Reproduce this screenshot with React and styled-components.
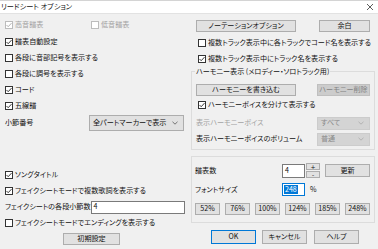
import React from 'react';
import styled, { createGlobalStyle } from 'styled-components';

const Global = createGlobalStyle`
  html, body { margin: 0; padding: 0; background: #f0f0f0; }
  body { font-family: "Noto Sans CJK JP", "Noto Sans", sans-serif; }
`;

const Window = styled.div`
  width: 378px;
  height: 249px;
  overflow: hidden;
  background: #f0f0f0;
  display: flex;
  flex-direction: column;
  font-family: "Noto Sans CJK JP", "Noto Sans", sans-serif;
  font-feature-settings: "palt";
  font-size: 7.1px;
  line-height: 1;
  color: #111;
`;

const TitleBar = styled.div`
  box-sizing: border-box;
  height: 14px;
  background: #fff;
  border-top: 1px solid #d4d4d4;
  border-bottom: 1px solid #e2e2e2;
  display: flex;
  align-items: center;
  justify-content: space-between;
  padding: 0 4px 0 1px;
`;

const Title = styled.span`
  font-size: 7.2px;
  color: #111;
`;

const Body = styled.div`
  display: grid;
  grid-template-columns: 191px 184px;
  padding-top: 2px;
`;

const LeftCol = styled.div`
  display: flex;
  flex-direction: column;
  padding-left: 5px;
  min-width: 0;
`;

const RightCol = styled.div`
  display: flex;
  flex-direction: column;
  min-width: 0;
`;

const Row = styled.div`
  display: flex;
  align-items: center;
  height: ${p => p.$h || 16}px;
  margin-top: ${p => p.$mt || 0}px;
  padding-left: ${p => p.$pl || 0}px;
  white-space: nowrap;
`;

const CheckLabel = styled.label`
  display: flex;
  align-items: center;
  width: ${p => (p.$w ? `${p.$w}px` : 'auto')};
  flex-shrink: 0;
  color: ${p => (p.$disabled ? '#a3a3a3' : '#111')};
`;

const Box = styled.span`
  box-sizing: border-box;
  width: 8px;
  height: 8px;
  border: 1px solid ${p => (p.$disabled ? '#bcbcbc' : '#333')};
  background: #fff;
  display: flex;
  align-items: center;
  justify-content: center;
  margin-right: 2px;
`;

const Check = ({ checked, disabled, w, children }) => (
  <CheckLabel $disabled={disabled} $w={w}>
    <Box $disabled={disabled}>
      {checked && (
        <svg width="6" height="6" viewBox="0 0 6 6">
          <path
            d="M0.5 3.0 L2.2 4.7 L5.5 1.1"
            fill="none"
            stroke={disabled ? '#a8a8a8' : '#222'}
            strokeWidth="0.9"
          />
        </svg>
      )}
    </Box>
    <span>{children}</span>
  </CheckLabel>
);

const Label = styled.span`
  display: block;
  flex: 0 0 ${p => (p.$w ? `${p.$w}px` : 'auto')};
  color: ${p => (p.$disabled ? '#a3a3a3' : '#111')};
`;

const Button = styled.div`
  box-sizing: border-box;
  width: ${p => p.$w}px;
  height: ${p => p.$h || 12}px;
  margin-left: ${p => p.$ml || 0}px;
  flex-shrink: 0;
  display: flex;
  align-items: center;
  justify-content: center;
  background: ${p => (p.$disabled ? '#cccccc' : '#e1e1e1')};
  border: 1px solid ${p => (p.$default ? '#0078d7' : p.$disabled ? '#bfbfbf' : '#adadad')};
  color: ${p => (p.$disabled ? '#838383' : '#111')};
`;

const SelectBox = styled.div`
  box-sizing: border-box;
  flex: 0 0 ${p => p.$w}px;
  width: ${p => p.$w}px;
  min-width: 0;
  overflow: hidden;
  height: ${p => p.$h}px;
  margin-left: ${p => (p.$ml != null ? `${p.$ml}px` : 'auto')};
  display: flex;
  align-items: center;
  justify-content: space-between;
  padding: 0 5px 0 3px;
  background: ${p => (p.$disabled ? '#d4d4d4' : '#e1e1e1')};
  border: 1px solid ${p => (p.$disabled ? '#cccccc' : '#adadad')};
  color: ${p => (p.$disabled ? '#8a8a8a' : '#111')};
`;

const Chevron = ({ color }) => (
  <svg width="6" height="4" viewBox="0 0 6 4" style={{ flexShrink: 0 }}>
    <path d="M0.5 0.8 L3 3.2 L5.5 0.8" fill="none" stroke={color} strokeWidth="0.8" />
  </svg>
);

const Select = ({ w, h, ml, disabled, children }) => (
  <SelectBox $w={w} $h={h} $ml={ml} $disabled={disabled}>
    <span>{children}</span>
    <Chevron color={disabled ? '#a8a8a8' : '#555'} />
  </SelectBox>
);

const TextInput = styled.div`
  box-sizing: border-box;
  width: ${p => p.$w}px;
  height: ${p => p.$h}px;
  flex-shrink: 0;
  display: flex;
  align-items: center;
  padding-left: 2px;
  background: #fff;
  border: 1px solid ${p => (p.$focus ? '#0078d7' : '#7a7a7a')};
`;

const Selected = styled.span`
  background: #0078d7;
  color: #fff;
  padding: 1px 1px;
  margin-left: -1px;
`;

const Group = styled.fieldset`
  box-sizing: border-box;
  min-width: 0;
  width: 184px;
  margin: 0;
  padding: 0 4px 2px 4px;
  border: 1px solid #dcdcdc;
`;

const Legend = styled.legend`
  padding: 0 1px;
  line-height: 10px;
  margin-left: -1px;
`;

const Panel = styled.div`
  box-sizing: border-box;
  width: 184px;
  margin-top: 6px;
  padding: 6px 4px 7px 3px;
  border: 1px solid #dcdcdc;
  display: flex;
  flex-direction: column;
`;

const SpinCol = styled.div`
  display: flex;
  flex-direction: column;
  gap: 1px;
  margin-left: 1px;
`;

const Spin = styled.div`
  box-sizing: border-box;
  width: 14px;
  height: 7px;
  background: #e1e1e1;
  border: 1px solid #adadad;
  display: flex;
  align-items: center;
  justify-content: center;
  font-family: "DejaVu Sans", sans-serif;
  font-size: 6px;
`;

const PctRow = styled.div`
  display: flex;
  justify-content: space-between;
  margin-top: 7px;
`;

const Percent = styled.span`
  margin-left: 5px;
`;

const Close = () => (
  <svg width="8" height="8" viewBox="0 0 8 8">
    <path d="M1 1 L7 7 M7 1 L1 7" stroke="#333" strokeWidth="0.8" />
  </svg>
);

const pcts = ['52%', '76%', '100%', '124%', '185%', '248%'];

export default function App() {
  return (
    <>
      <Global />
      <Window>
        <TitleBar>
          <Title>リードシート オプション</Title>
          <Close />
        </TitleBar>
        <Body>
          <LeftCol>
            <Row $h={18}>
              <Check checked disabled w={86}>高音譜表</Check>
              <Check disabled>低音譜表</Check>
            </Row>
            <Row><Check checked>譜表自動設定</Check></Row>
            <Row><Check>各段に音部記号を表示する</Check></Row>
            <Row><Check>各段に調号を表示する</Check></Row>
            <Row><Check checked>コード</Check></Row>
            <Row><Check checked>五線譜</Check></Row>
            <Row $h={17}>
              <Label $w={84}>小節番号</Label>
              <Select w={95} h={16} ml={0}>全パートマーカーで表示</Select>
            </Row>
            <Row $mt={36}><Check checked>ソングタイトル</Check></Row>
            <Row><Check checked>フェイクシートモードで複数歌詞を表示する</Check></Row>
            <Row>
              <Label $w={85}>フェイクシートの各段小節数</Label>
              <TextInput $w={94} $h={13}>4</TextInput>
            </Row>
            <Row><Check>フェイクシートモードでエンディングを表示する</Check></Row>
            <Row $h={12} $mt={2}>
              <Button $w={57} $ml={58}>初期設定</Button>
            </Row>
          </LeftCol>

          <RightCol>
            <Row $h={12} $mt={4}>
              <Button $w={100} $ml={5}>ノーテーションオプション</Button>
              <Button $w={51} $ml={23}>余白</Button>
            </Row>
            <Row $mt={3} $pl={7}><Check>複数トラック表示中に各トラックでコード名を表示する</Check></Row>
            <Row $h={15} $pl={7}><Check checked>複数トラック表示中にトラック名を表示する</Check></Row>
            <Group>
              <Legend>ハーモニー表示 (メロディー・ソロトラック用)</Legend>
              <Row $h={12} $mt={8}>
                <Button $w={100}>ハーモニーを書き込む</Button>
                <Button $w={53} $ml={21} $disabled>ハーモニー削除</Button>
              </Row>
              <Row $mt={1} $pl={2}><Check checked>ハーモニーボイスを分けて表示する</Check></Row>
              <Row $mt={2}>
                <Label $disabled>表示ハーモニーボイス</Label>
                <Select w={53} h={13} disabled>すべて</Select>
              </Row>
              <Row>
                <Label>表示ハーモニーボイスのボリューム</Label>
                <Select w={53} h={13} disabled>普通</Select>
              </Row>
            </Group>
            <Panel>
              <Row $h={15}>
                <Label $w={87}>譜表数</Label>
                <TextInput $w={23} $h={14}>4</TextInput>
                <SpinCol>
                  <Spin>+</Spin>
                  <Spin>-</Spin>
                </SpinCol>
                <Button $w={45} $h={13} $ml={5}>更新</Button>
              </Row>
              <Row $h={13} $mt={5}>
                <Label $w={87}>フォントサイズ</Label>
                <TextInput $w={23} $h={13} $focus><Selected>248</Selected></TextInput>
                <Percent>%</Percent>
              </Row>
              <PctRow>
                {pcts.map(p => (
                  <Button key={p} $w={25}>{p}</Button>
                ))}
              </PctRow>
            </Panel>
            <Row $h={14} $mt={7}>
              <Button $w={45} $h={14} $ml={20} $default>OK</Button>
              <Button $w={45} $h={14} $ml={6}>キャンセル</Button>
              <Button $w={45} $h={14} $ml={7}>ヘルプ</Button>
            </Row>
          </RightCol>
        </Body>
      </Window>
    </>
  );
}
